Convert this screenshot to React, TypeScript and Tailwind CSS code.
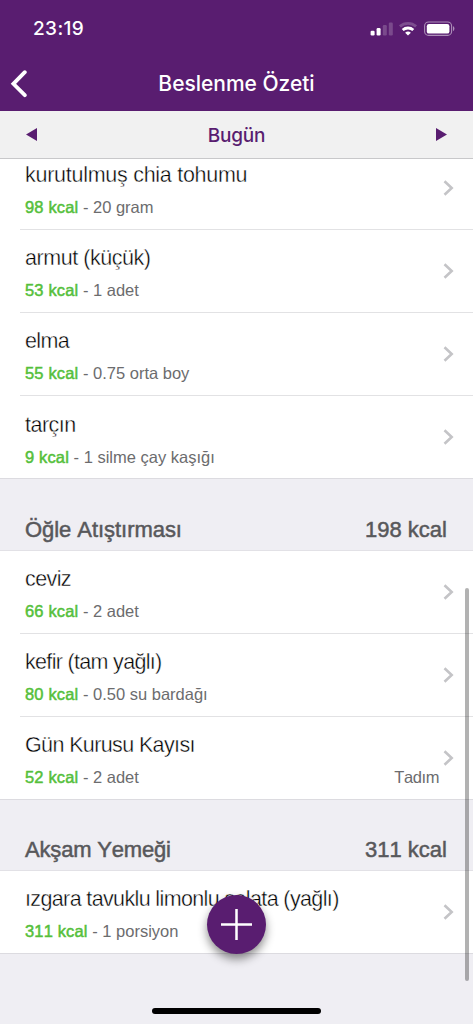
import React from 'react';

type Food = {
  name: string;
  kcal: number;
  amount: string;
  note?: string;
  nameClass: string;
};

type Meal = {
  title: string;
  titleClass: string;
  total: number;
  foods: Food[];
};

const breakfast: Food[] = [
  { name: 'kurutulmuş chia tohumu', kcal: 98, amount: '20 gram', nameClass: 'tracking-[-0.27px]' },
  { name: 'armut (küçük)', kcal: 53, amount: '1 adet', nameClass: 'tracking-[-0.45px]' },
  { name: 'elma', kcal: 55, amount: '0.75 orta boy', nameClass: 'tracking-[-0.6px]' },
  { name: 'tarçın', kcal: 9, amount: '1 silme çay kaşığı', nameClass: 'tracking-[-0.5px]' },
];

const meals: Meal[] = [
  {
    title: 'Öğle Atıştırması',
    titleClass: 'tracking-[-0.05px]',
    total: 198,
    foods: [
      { name: 'ceviz', kcal: 66, amount: '2 adet', nameClass: 'tracking-[-0.6px]' },
      { name: 'kefir (tam yağlı)', kcal: 80, amount: '0.50 su bardağı', nameClass: 'tracking-[-0.68px]' },
      { name: 'Gün Kurusu Kayısı', kcal: 52, amount: '2 adet', note: 'Tadım', nameClass: 'tracking-[-0.62px]' },
    ],
  },
  {
    title: 'Akşam Yemeği',
    titleClass: 'tracking-[-0.18px]',
    total: 311,
    foods: [
      {
        name: 'ızgara tavuklu limonlu salata (yağlı)',
        kcal: 311,
        amount: '1 porsiyon',
        nameClass: 'tracking-[-0.63px]',
      },
    ],
  },
];

function StatusIcons() {
  return (
    <svg width="86" height="16" viewBox="0 0 86 16" fill="none">
      <rect x="0.6" y="9.8" width="4" height="4.6" rx="1.2" fill="#fff" />
      <rect x="6.6" y="7" width="4" height="7.4" rx="1.2" fill="#fff" />
      <rect x="12.8" y="4" width="4" height="10.4" rx="1.2" fill="#fff" opacity="0.2" />
      <rect x="18.8" y="1.5" width="4" height="12.9" rx="1.2" fill="#fff" opacity="0.2" />
      <path d="M29.9 5.4a12.2 12.2 0 0 1 16.2 0" stroke="#fff" strokeWidth="2.8" opacity="0.22" />
      <path d="M32.7 9a8 8 0 0 1 10.6 0" stroke="#fff" strokeWidth="2.8" />
      <path d="M38 14.6l-2.9-2.8a4.2 4.2 0 0 1 5.8 0z" fill="#fff" />
      <rect x="54.6" y="1" width="27" height="13.4" rx="4" stroke="#fff" strokeOpacity="0.5" strokeWidth="1.1" />
      <rect x="56.8" y="3" width="22.6" height="9.6" rx="2.2" fill="#fff" />
      <path d="M83 5.2c1.9.7 1.9 4 0 4.8z" fill="#fff" opacity="0.5" />
    </svg>
  );
}

function Header() {
  return (
    <header className="h-[111px] bg-[#591d70] font-['Inter',sans-serif] text-white">
      <div className="flex h-[58px] items-center justify-between pr-[17px] pl-[33px]">
        <span className="pt-px text-[19px] font-medium tracking-[0.4px]">23:19</span>
        <StatusIcons />
      </div>
      <div className="grid h-[52px] grid-cols-[60px_1fr_60px] items-center">
        <button type="button" aria-label="Geri" className="pl-[10px]">
          <svg width="18" height="28" viewBox="0 0 18 28" fill="none">
            <path d="M14.8 2.2L3.4 13.8l11.4 11.4" stroke="#fff" strokeWidth="3.8" strokeLinecap="round" />
          </svg>
        </button>
        <h1 className="text-center text-[21px] font-medium tracking-[-0.02px]">Beslenme Özeti</h1>
      </div>
    </header>
  );
}

function DateBar() {
  return (
    <div className="relative z-10 flex h-12 items-center justify-between border-b border-[#c8c8ca] bg-[#f1f1f1] px-[26px] text-[#591d70]">
      <svg width="11" height="13" viewBox="0 0 11 13" fill="currentColor">
        <path d="M11 0v13L0 6.5z" />
      </svg>
      <span className="pt-[3px] font-['Inter',sans-serif] text-[19px] font-medium tracking-[-0.2px]">Bugün</span>
      <svg width="11" height="13" viewBox="0 0 11 13" fill="currentColor">
        <path d="M0 0v13l11-6.5z" />
      </svg>
    </div>
  );
}

function FoodRow({ food, last }: { food: Food; last: boolean }) {
  return (
    <li className="flex h-[83.1px] flex-col bg-white">
      <div className="flex flex-1 items-center pr-[19px] pl-[25px]">
        <div className="flex-1 pt-[3.5px]">
          <p
            className={`text-[21.5px] leading-[28px] whitespace-nowrap text-black [-webkit-text-stroke:0.4px_white] ${food.nameClass}`}
          >
            {food.name}
          </p>
          <div className="mt-[7px] flex justify-between pr-[7px] text-[16.5px] leading-[22px] text-[#6c6c6e] [font-kerning:none]">
            <p>
              <span className="tracking-[0.15px] text-[#55bf3b] [-webkit-text-stroke:0.5px_#55bf3b]">
                {food.kcal} kcal
              </span>
              {` - ${food.amount}`}
            </p>
            {food.note && <p className="tracking-[-0.4px]">{food.note}</p>}
          </div>
        </div>
        <svg width="11" height="16" viewBox="0 0 11 16" fill="none" className="-ml-[3px]">
          <path d="M1.5 1.2L8.7 8l-7.2 6.8" stroke="#c4c4c7" strokeWidth="2.6" />
        </svg>
      </div>
      <div className={last ? 'h-px bg-[#dcdbe0]' : 'ml-[20px] h-px bg-[#e2e2e4]'} />
    </li>
  );
}

function FoodList({ foods }: { foods: Food[] }) {
  return (
    <ul>
      {foods.map((food, i) => (
        <FoodRow key={food.name} food={food} last={i === foods.length - 1} />
      ))}
    </ul>
  );
}

function MealSection({ meal }: { meal: Meal }) {
  return (
    <section>
      <div className="flex h-[71.2px] items-end justify-between border-b border-[#e2e1e6] pr-[26px] pb-[5px] pl-[25px] text-[22px] leading-[30px] text-[#58585b] [font-kerning:none] [-webkit-text-stroke:0.5px_#58585b]">
        <h2 className={meal.titleClass}>{meal.title}</h2>
        <span>{meal.total} kcal</span>
      </div>
      <FoodList foods={meal.foods} />
    </section>
  );
}

function App() {
  return (
    <main className="relative h-[1024px] w-[473px] overflow-hidden bg-[#efeef3] font-['Liberation_Sans',Arial,sans-serif]">
      <Header />
      <DateBar />
      <div className="-mt-[12px]">
        <FoodList foods={breakfast} />
        {meals.map((meal) => (
          <MealSection key={meal.title} meal={meal} />
        ))}
      </div>
      <div className="absolute top-[588px] right-[4px] h-[393px] w-[4px] rounded-full bg-black/30" />
      <button
        type="button"
        aria-label="Ekle"
        className="absolute top-[895px] left-[207px] flex size-[59px] items-center justify-center rounded-full bg-[#591d70] shadow-[0_5px_10px_rgba(0,0,0,0.45)]"
      >
        <svg width="31" height="31" viewBox="0 0 31 31" fill="none">
          <path d="M15.5 0v31M0 15.5h31" stroke="#fff" strokeWidth="2.5" />
        </svg>
      </button>
      <div className="absolute bottom-[10px] left-[152px] h-[6px] w-[169px] rounded-full bg-black" />
    </main>
  );
}

export default App;
